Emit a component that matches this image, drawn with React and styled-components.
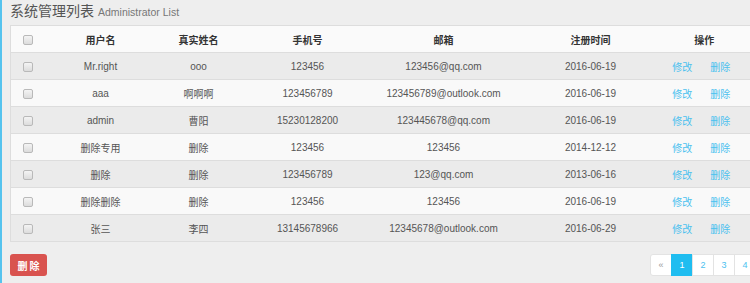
import React from 'react';
import styled, { createGlobalStyle } from 'styled-components';

const GlobalStyle = createGlobalStyle`
  html, body {
    margin: 0;
    padding: 0;
    overflow: hidden;
    background: #eeeeee;
  }
  body {
    font-family: "Liberation Sans", "Noto Sans CJK SC", sans-serif;
  }
`;

const Page = styled.div`
  width: 746px;
  height: 283px;
  padding: 0 10px 0 8px;
  border-left: 2px solid #55c3ee;
  background: #eeeeee;
`;

const TitleBar = styled.div`
  height: 25px;
  display: flex;
  align-items: baseline;
  padding-top: 1px;
  box-sizing: border-box;
`;

const Title = styled.h2`
  margin: 0;
  font-size: 14px;
  font-weight: normal;
  color: #555;
  line-height: 20px;
`;

const SubTitle = styled.small`
  margin-left: 4px;
  font-size: 10.5px;
  color: #777;
`;

const Table = styled.table`
  width: 746px;
  border-collapse: collapse;
  table-layout: fixed;
  border: 1px solid #dddddd;
  font-size: 10px;
  color: #555;
`;

const Th = styled.th`
  height: 26px;
  padding: 0 ${p => p.$pr || 0}px 0 0;
  text-align: center;
  font-weight: bold;
  color: #333;
  background: #fafafa;
  border-bottom: 1px solid #dddddd;
`;

const Row = styled.tr`
  background: ${p => (p.$odd ? '#ebebeb' : '#f9f9f9')};
`;

const Td = styled.td`
  height: 26px;
  padding: 0 ${p => p.$pr || 0}px 0 0;
  text-align: center;
  border-top: 1px solid #dddddd;
  white-space: nowrap;
`;

const Check = styled.span`
  display: inline-block;
  width: 8px;
  height: 8px;
  vertical-align: middle;
  border: 1px solid #b9b9b9;
  border-radius: 2px;
  background: linear-gradient(#f4f4f4, #dcdcdc);
`;

const Ops = styled.div`
  display: flex;
  justify-content: center;
  gap: 18px;
`;

const OpLink = styled.a`
  color: #4cc1ef;
  text-decoration: none;
  cursor: pointer;
`;

const Footer = styled.div`
  display: flex;
  justify-content: space-between;
  align-items: center;
  margin-top: 12px;
`;

const DangerButton = styled.button`
  width: 37px;
  height: 22px;
  border: none;
  border-radius: 3px;
  background: #d9534f;
  color: #fff;
  font-family: inherit;
  font-size: 10px;
  font-weight: bold;
  letter-spacing: 2px;
  padding: 0 0 0 2px;
`;

const Pager = styled.ul`
  display: flex;
  margin: 0;
  padding: 0;
  list-style: none;
`;

const PageItem = styled.li`
  width: 22px;
  height: 22px;
  box-sizing: border-box;
  display: flex;
  align-items: center;
  justify-content: center;
  font-size: 9px;
  color: ${p => (p.$active ? '#fff' : p.$muted ? '#999' : '#4cc1ef')};
  background: ${p => (p.$active ? '#1fbdf0' : '#fff')};
  border: 1px solid ${p => (p.$active ? '#1fbdf0' : '#e3e3e3')};
  margin-left: -1px;
  &:first-child {
    border-radius: 3px 0 0 3px;
    margin-left: 0;
  }
`;

const columns = [
  { key: 'check', width: 35 },
  { key: 'user', label: '用户名', width: 110 },
  { key: 'real', label: '真实姓名', width: 86 },
  { key: 'phone', label: '手机号', width: 132 },
  { key: 'email', label: '邮箱', width: 140 },
  { key: 'date', label: '注册时间', width: 154 },
  { key: 'op', label: '操作', width: 89, pr: 15 },
];

const rows = [
  ['Mr.right', 'ooo', '123456', '123456@qq.com', '2016-06-19'],
  ['aaa', '啊啊啊', '123456789', '123456789@outlook.com', '2016-06-19'],
  ['admin', '曹阳', '15230128200', '123445678@qq.com', '2016-06-19'],
  ['删除专用', '删除', '123456', '123456', '2014-12-12'],
  ['删除', '删除', '123456789', '123@qq.com', '2013-06-16'],
  ['删除删除', '删除', '123456', '123456', '2016-06-19'],
  ['张三', '李四', '13145678966', '12345678@outlook.com', '2016-06-29'],
];

export default function App() {
  return (
    <>
      <GlobalStyle />
      <Page>
        <TitleBar>
          <Title>系统管理列表</Title>
          <SubTitle>Administrator List</SubTitle>
        </TitleBar>
        <Table>
          <colgroup>
            {columns.map(c => (
              <col key={c.key} style={{ width: c.width }} />
            ))}
          </colgroup>
          <thead>
            <tr>
              {columns.map(c => (
                <Th key={c.key} $pr={c.pr}>
                  {c.key === 'check' ? <Check /> : c.label}
                </Th>
              ))}
            </tr>
          </thead>
          <tbody>
            {rows.map((r, i) => (
              <Row key={i} $odd={i % 2 === 0}>
                <Td><Check /></Td>
                {r.map((cell, j) => (
                  <Td key={j}>{cell}</Td>
                ))}
                <Td $pr={21}>
                  <Ops>
                    <OpLink>修改</OpLink>
                    <OpLink>删除</OpLink>
                  </Ops>
                </Td>
              </Row>
            ))}
          </tbody>
        </Table>
        <Footer>
          <DangerButton>删除</DangerButton>
          <Pager>
            <PageItem $muted>«</PageItem>
            <PageItem $active>1</PageItem>
            <PageItem>2</PageItem>
            <PageItem>3</PageItem>
            <PageItem>4</PageItem>
          </Pager>
        </Footer>
      </Page>
    </>
  );
}
